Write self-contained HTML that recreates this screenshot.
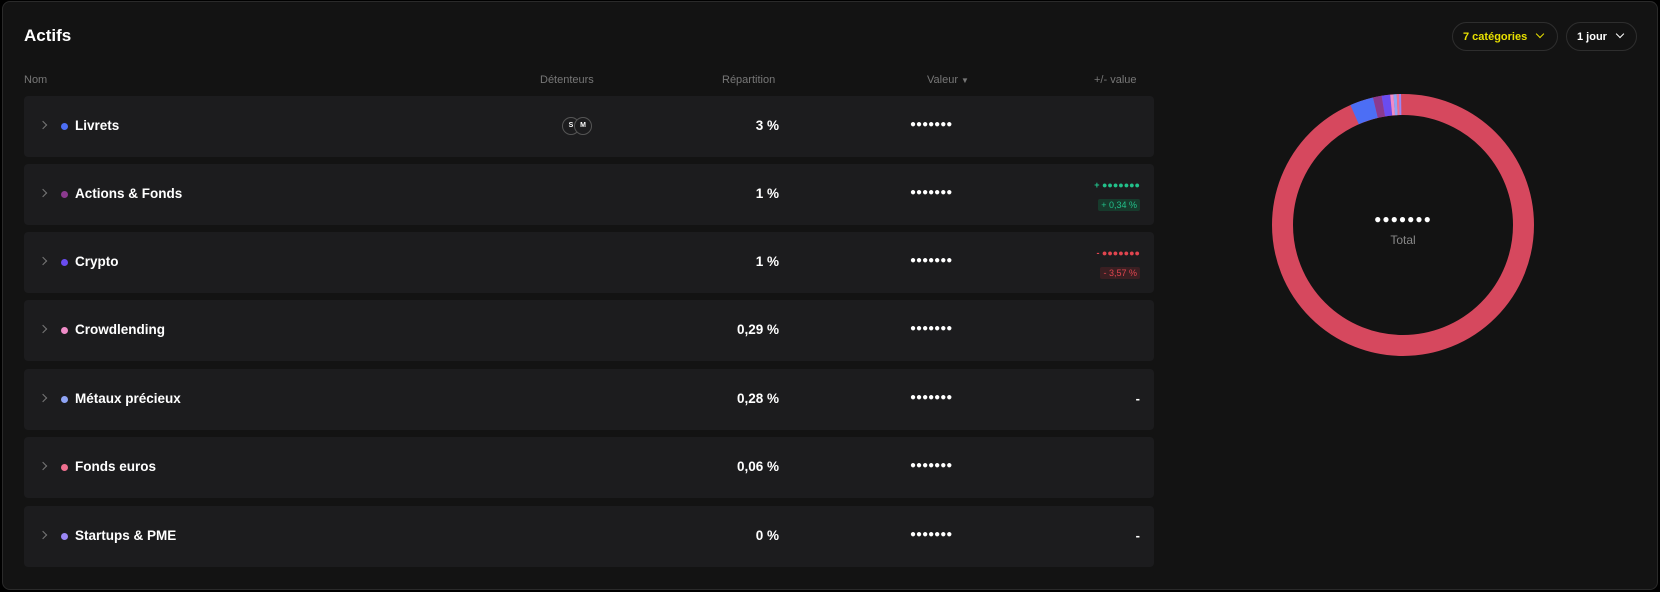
<!DOCTYPE html>
<html><head><meta charset="utf-8"><style>
*{margin:0;padding:0;box-sizing:border-box}
body{width:1660px;height:592px;background:#000;font-family:"Liberation Sans",sans-serif;color:#fff;overflow:hidden;position:relative}
.panel{position:absolute;left:2px;top:1px;width:1656px;height:589px;background:#131313;border:1px solid #2a2a2a;border-radius:8px}
h1{position:absolute;left:24px;top:26px;font-size:17px;font-weight:bold}
.hdr{position:absolute;top:74px;font-size:11px;color:#777}
.row{position:absolute;left:24px;width:1130px;height:61px;background:#1c1c1e;border-radius:4px}
.chev{position:absolute;left:16px;top:26px;width:6px;height:6px;border-right:1px solid #777;border-top:1px solid #777;transform:rotate(45deg)}
.dot{position:absolute;left:37px;top:27px;width:7px;height:7px;border-radius:50%}
.name{position:absolute;left:51px;top:22px;font-size:13.5px;font-weight:bold}
.pct{position:absolute;right:375px;top:22px;font-size:13.5px;font-weight:bold;text-align:right}
.val{position:absolute;left:886px;top:23px;font-size:10px;font-weight:bold;letter-spacing:0px}
.dash{position:absolute;right:14px;top:22px;font-size:13px;font-weight:bold}
.pv{position:absolute;right:14px;top:16px;font-size:9px;font-weight:bold;letter-spacing:0px;text-align:right}
.tag{position:absolute;right:14px;top:35px;font-size:9px;padding:1px 3px;border-radius:2px}
.btn{position:absolute;top:22px;height:29px;border:1px solid #2e2e2e;border-radius:15px;font-size:11px;font-weight:bold;padding:8px 10px}
.btn .c{display:inline-block;width:6px;height:6px;border-right:1.2px solid currentColor;border-bottom:1.2px solid currentColor;transform:rotate(45deg);margin-left:10px;position:relative;top:-3px}
</style></head><body>
<div class="panel"></div>
<h1>Actifs</h1>
<div class="btn" style="left:1452px;width:106px;color:#e8e000">7 catégories<span class="c"></span></div>
<div class="btn" style="left:1566px;width:71px;color:#fff">1 jour<span class="c"></span></div>
<div class="hdr" style="left:24px">Nom</div>
<div class="hdr" style="left:540px">Détenteurs</div>
<div class="hdr" style="left:722px">Répartition</div>
<div class="hdr" style="left:927px">Valeur <span style="font-size:8px">▼</span></div>
<div class="hdr" style="left:1094px">+/- value</div>

<div class="row" style="top:96px"><div class="chev"></div><div class="dot" style="background:#4c6ef5"></div><div class="name">Livrets</div>
<div style="position:absolute;left:538px;top:21px;width:18px;height:18px;border:1px solid #555;border-radius:50%;font-size:7px;font-weight:bold;text-align:center;line-height:16px;background:#1c1c1e">S</div>
<div style="position:absolute;left:550px;top:21px;width:18px;height:18px;border:1px solid #555;border-radius:50%;font-size:7px;font-weight:bold;text-align:center;line-height:16px;background:#1c1c1e">M</div>
<div class="pct">3 %</div><div class="val">●●●●●●●</div></div>

<div class="row" style="top:164px"><div class="chev"></div><div class="dot" style="background:#8b3a8f"></div><div class="name">Actions &amp; Fonds</div><div class="pct">1 %</div><div class="val">●●●●●●●</div>
<div class="pv" style="color:#22c08a">+ ●●●●●●●</div><div class="tag" style="color:#22c08a;background:#173a2c">+ 0,34 %</div></div>

<div class="row" style="top:232px"><div class="chev"></div><div class="dot" style="background:#6a4cf0"></div><div class="name">Crypto</div><div class="pct">1 %</div><div class="val">●●●●●●●</div>
<div class="pv" style="color:#e0454f">- ●●●●●●●</div><div class="tag" style="color:#e0454f;background:#3a1f22">- 3,57 %</div></div>

<div class="row" style="top:300px"><div class="chev"></div><div class="dot" style="background:#f08cc8"></div><div class="name">Crowdlending</div><div class="pct">0,29 %</div><div class="val">●●●●●●●</div></div>

<div class="row" style="top:369px"><div class="chev"></div><div class="dot" style="background:#8fa4f5"></div><div class="name">Métaux précieux</div><div class="pct">0,28 %</div><div class="val">●●●●●●●</div><div class="dash">-</div></div>

<div class="row" style="top:437px"><div class="chev"></div><div class="dot" style="background:#f07090"></div><div class="name">Fonds euros</div><div class="pct">0,06 %</div><div class="val">●●●●●●●</div></div>

<div class="row" style="top:506px"><div class="chev"></div><div class="dot" style="background:#9b87f5"></div><div class="name">Startups &amp; PME</div><div class="pct">0 %</div><div class="val">●●●●●●●</div><div class="dash">-</div></div>

<svg style="position:absolute;left:0;top:0" width="1660" height="592">
<g transform="translate(1403,225) rotate(-90)">
<circle r="120.5" fill="none" stroke="#d6485e" stroke-width="21"/>
<circle r="120.5" fill="none" stroke="#4c6ef5" stroke-width="21" stroke-dasharray="22 2000" stroke-dashoffset="-707"/>
<circle r="120.5" fill="none" stroke="#8b3a8f" stroke-width="21" stroke-dasharray="8 2000" stroke-dashoffset="-729"/>
<circle r="120.5" fill="none" stroke="#6a4cf0" stroke-width="21" stroke-dasharray="8 2000" stroke-dashoffset="-737"/>
<circle r="120.5" fill="none" stroke="#f08cc8" stroke-width="21" stroke-dasharray="3 2000" stroke-dashoffset="-745"/>
<circle r="120.5" fill="none" stroke="#8fa4f5" stroke-width="21" stroke-dasharray="3 2000" stroke-dashoffset="-748"/>
<circle r="120.5" fill="none" stroke="#f07090" stroke-width="21" stroke-dasharray="2 2000" stroke-dashoffset="-751"/>
<circle r="120.5" fill="none" stroke="#9b87f5" stroke-width="21" stroke-dasharray="2 2000" stroke-dashoffset="-753"/>
</g>
<text x="1403" y="223" text-anchor="middle" fill="#fff" font-family="Liberation Sans" font-size="12" font-weight="bold" letter-spacing="1">●●●●●●●</text>
<text x="1403" y="244" text-anchor="middle" fill="#888" font-family="Liberation Sans" font-size="12">Total</text>
</svg>
</body></html>
